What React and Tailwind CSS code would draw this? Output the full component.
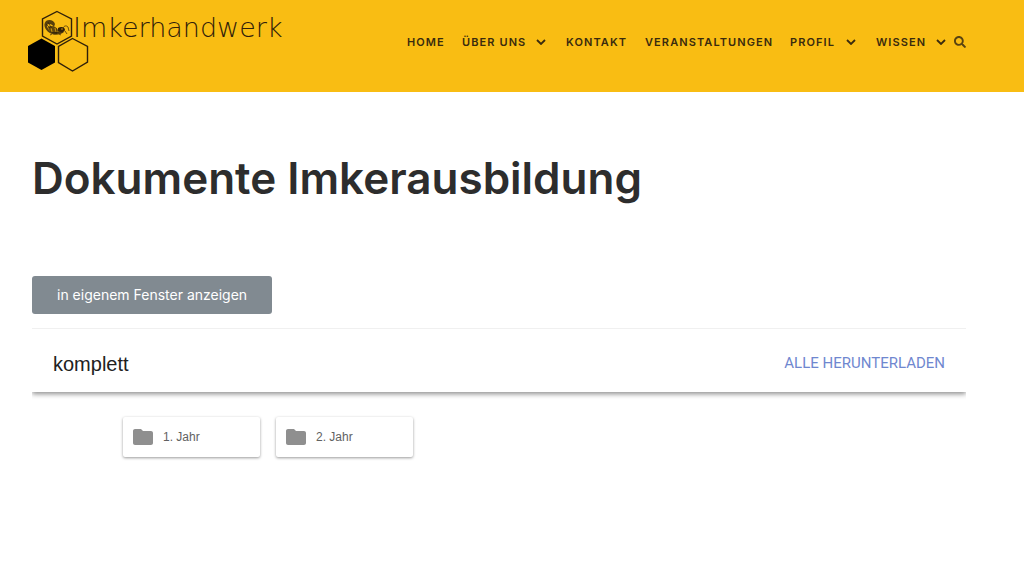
import { FaSearch } from "react-icons/fa"
import { MdFolder } from "react-icons/md"

const navItems = [
  { label: "Home", width: "w-[55px]" },
  { label: "Über uns", width: "w-[104px]", hasMenu: true },
  { label: "Kontakt", width: "w-[79px]" },
  { label: "Veranstaltungen", width: "w-[145px]" },
  { label: "Profil", width: "w-[86px]", hasMenu: true },
  { label: "Wissen", width: "w-[70px]", hasMenu: true },
]

const folders = ["1. Jahr", "2. Jahr"]

function Logo() {
  return (
    <a href="#home" className="flex items-start text-[#30200a]">
      <svg className="h-16 w-[62px] shrink-0" viewBox="0 0 62 64" fill="none" aria-hidden="true">
        <path d="M30 3.500 44.500 11v17L30 36 15.500 28V11Z" stroke="currentColor" strokeWidth="1.4" />
        <path d="M14.500 30.500 28 38v16.500L14.500 62 1 54.500V38Z" fill="#000" />
        <path d="M45.500 30.500 60.500 38.500V54L45.500 63 31.500 54.500v-16Z" stroke="currentColor" strokeWidth="1.4" />
        {/* bee */}
        <path d="M19 13c3-2 8-1 9 3l-1 3c-2-3-5-4-7-2 0 3 2 6 6 7h11c-2 2-8 4-12 2-6-2-10-9-6-13Z" fill="currentColor" fillOpacity=".8" />
        <path d="M21 19c3-2 8-1 10 3l-1 4c-5 0-8-3-9-7Z" fill="currentColor" fillOpacity=".75" />
        <path d="M31 20c3-2 7-1 7 2-1 3-5 3-7 1Z" fill="currentColor" />
        <path d="m19 16 5 5m-3-7 4 7m4-1v5m3-5-1 5m5-5c1-2 3-3 5-1m0 0 1 4m-4 0 2 3M25 26l-2 1m9-1 2 1" stroke="currentColor" strokeWidth=".7" />
        <path d="m24 20 1 4m3-4 1 4m5-3h2" stroke="#f9bd13" strokeWidth=".7" />
      </svg>
      <span className="-ml-4 pt-1 font-['DejaVu_Sans_Light','DejaVu_Sans',sans-serif] text-[27px] leading-8 font-extralight">
        Imkerhandwerk
      </span>
    </a>
  )
}

function Chevron() {
  return (
    <svg className="h-[6px] w-[10px]" viewBox="0 0 10 6" fill="none" aria-hidden="true">
      <path d="m1 1 4 4 4-4" stroke="currentColor" strokeWidth="1.8" />
    </svg>
  )
}

function Header() {
  return (
    <header className="flex h-[92px] items-start justify-between bg-[#f9bd13] pt-2 pr-[58px] pl-[27px]">
      <Logo />
      <div className="flex h-[68px] items-center">
        <nav aria-label="Hauptmenü">
          <ul className="flex items-center">
            {navItems.map((item) => (
              <li key={item.label} className={item.width}>
                <a
                  href="#menu"
                  className="flex items-center justify-between font-['Inter',sans-serif] text-[11px] leading-4 font-semibold tracking-widest whitespace-nowrap text-[#3a2b0e] uppercase"
                >
                  {item.label}
                  {item.hasMenu && (
                    <span className={item.label === "Wissen" ? "" : "pr-5"}>
                      <Chevron />
                    </span>
                  )}
                </a>
              </li>
            ))}
          </ul>
        </nav>
        <button type="button" aria-label="Suche" className="ml-2 text-[#594311]">
          <FaSearch size={12} />
        </button>
      </div>
    </header>
  )
}

function App() {
  return (
    <div className="min-h-screen bg-white">
      <Header />

      <main className="pt-[54px] pr-[58px] pl-8">
        <h1 className="font-['Inter',sans-serif] text-[44px] leading-[64px] font-semibold text-[#2d2d2d]">
          Dokumente Imkerausbildung
        </h1>

        <a
          href="#fenster"
          className="mt-[66px] inline-flex h-[38px] items-center rounded-[3px] bg-[#818a91] px-[25px] font-['Inter',sans-serif] text-sm text-white"
        >
          in eigenem Fenster anzeigen
        </a>

        {/* Shared folder */}
        <section className="mt-[14px] overflow-hidden border-t border-[#f0f0f0] pb-4 font-['Liberation_Sans',Arial,sans-serif]">
          <div className="flex h-[63px] items-center justify-between px-[21px] pt-1.5 shadow-[0_2px_5px_rgba(0,0,0,0.45)]">
            <h2 className="text-xl text-[#212121]">komplett</h2>
            <button type="button" className="font-['Roboto',sans-serif] text-[15px] text-[#6f87cf] uppercase">
              Alle herunterladen
            </button>
          </div>

          <ul className="mt-[25px] flex gap-4 pl-[91px]">
            {folders.map((folder) => (
              <li key={folder}>
                <a
                  href="#ordner"
                  className="flex h-10 w-[137px] items-center gap-2 rounded-[2px] bg-white px-2 text-xs text-[#616161] shadow-[0_1px_3px_rgba(0,0,0,0.4)]"
                >
                  <MdFolder size={24} color="#8f8f8f" />
                  {folder}
                </a>
              </li>
            ))}
          </ul>
        </section>
      </main>
    </div>
  )
}

export default App
